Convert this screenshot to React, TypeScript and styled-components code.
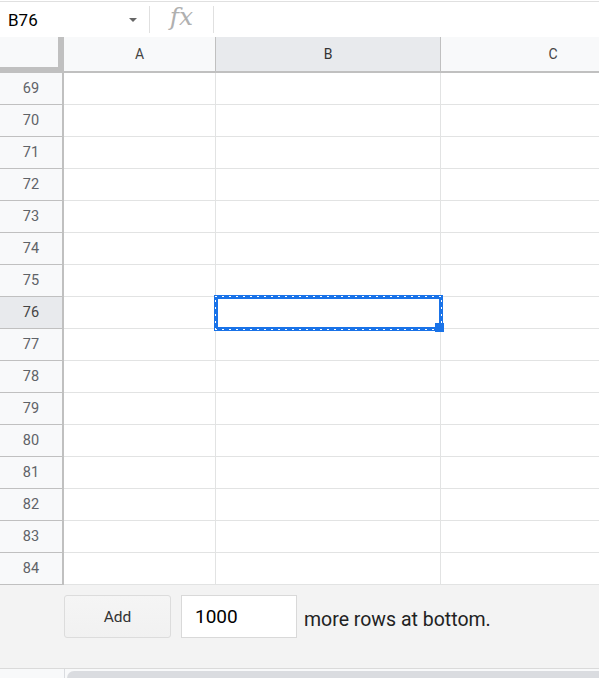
import React from "react";
import styled, { createGlobalStyle, css } from "styled-components";

const GlobalStyle = createGlobalStyle`
  html, body {
    margin: 0;
    padding: 0;
    background: #ffffff;
    font-family: Roboto, "Liberation Sans", Arial, sans-serif;
    overflow: hidden;
  }
`;

const Page = styled.div`
  width: 599px;
  height: 678px;
  display: flex;
  flex-direction: column;
  overflow: hidden;
`;

// name box + formula input
const FormulaBar = styled.div`
  height: 35px;
  margin-top: 1px;
  border-top: 1px solid #e0e0e0;
  display: flex;
  align-items: center;
  flex-shrink: 0;
`;

const NameBox = styled.div`
  width: 149px;
  height: 100%;
  display: flex;
  align-items: center;
  justify-content: space-between;
  padding: 0 12px 0 8px;
  box-sizing: border-box;
  font-size: 17px;
  color: #000;
`;

const Caret = styled.span`
  width: 0;
  height: 0;
  border-left: 4px solid transparent;
  border-right: 4px solid transparent;
  border-top: 4px solid #666;
`;

const Divider = styled.div`
  width: 1px;
  height: 27px;
  background: #e0e0e0;
`;

const Fx = styled.span`
  width: 63px;
  text-align: center;
  font-family: "DejaVu Serif", "Liberation Serif", serif;
  font-style: italic;
  font-size: 25px;
  color: #b0b0b0;
  margin-top: -6px;
`;

const Sheet = styled.div`
  display: grid;
  grid-template-columns: 64px 152px 225px 225px;
  grid-auto-rows: 32px;
  grid-template-rows: 36px;
  flex-shrink: 0;
`;

const Corner = styled.div`
  background: #f8f9fa;
  border-right: 6px solid #c0c0c0;
  border-bottom: 6px solid #c0c0c0;
  box-sizing: border-box;
`;

const ColHead = styled.div<{ $active?: boolean }>`
  background: ${(p) => (p.$active ? "#e8eaed" : "#f8f9fa")};
  border-right: 1px solid #c0c0c0;
  border-bottom: 2px solid #c0c0c0;
  box-sizing: border-box;
  display: flex;
  align-items: center;
  justify-content: center;
  font-size: 14px;
  color: ${(p) => (p.$active ? "#333" : "#444")};
`;

const RowHead = styled.div<{ $active?: boolean }>`
  background: ${(p) => (p.$active ? "#e8eaed" : "#f8f9fa")};
  border-right: 2px solid #c0c0c0;
  border-bottom: 1px solid #c0c0c0;
  box-sizing: border-box;
  display: flex;
  align-items: center;
  justify-content: center;
  font-size: 14.5px;
  color: ${(p) => (p.$active ? "#444" : "#5f6368")};
`;

const Cell = styled.div<{ $selected?: boolean }>`
  position: relative;
  border-right: 1px solid #e2e3e3;
  border-bottom: 1px solid #e2e3e3;
  box-sizing: border-box;
  ${(p) =>
    p.$selected &&
    css`
      z-index: 1;
    `}
`;

// copy outline with marching-ants dashes
const CopyOutline = styled.div`
  position: absolute;
  left: -2px;
  top: -2px;
  right: -3px;
  bottom: -3px;
  border: 4px solid #1a73e8;
  pointer-events: none;

  &::after {
    content: "";
    position: absolute;
    inset: -3px;
    background:
      repeating-linear-gradient(90deg, #fff 0 2px, transparent 2px 7px) top / 100% 1px no-repeat,
      repeating-linear-gradient(90deg, #fff 0 2px, transparent 2px 7px) bottom / 100% 1px no-repeat,
      repeating-linear-gradient(0deg, #fff 0 2px, transparent 2px 7px) left / 1px 100% no-repeat,
      repeating-linear-gradient(0deg, #fff 0 2px, transparent 2px 7px) right / 1px 100% no-repeat;
  }
`;

const FillHandle = styled.div`
  position: absolute;
  right: -4px;
  bottom: -4px;
  width: 9px;
  height: 9px;
  background: #1a73e8;
  z-index: 2;
`;

const Footer = styled.div`
  height: 84px;
  background: #f3f3f3;
  border-bottom: 1px solid #dadada;
  display: flex;
  align-items: flex-start;
  padding: 10px 0 0 64px;
  box-sizing: border-box;
  flex-shrink: 0;
`;

const AddButton = styled.button`
  width: 107px;
  height: 43px;
  background: linear-gradient(#f5f5f5, #f1f1f1);
  border: 1px solid #dcdcdc;
  border-radius: 3px;
  font-family: Roboto, "Liberation Sans", Arial, sans-serif;
  font-size: 15.5px;
  color: #333;
  padding: 0;
  margin-right: 10px;
`;

const RowCount = styled.input`
  width: 116px;
  height: 43px;
  box-sizing: border-box;
  border: 1px solid #d9d9d9;
  background: #fff;
  font-family: Roboto, "Liberation Sans", Arial, sans-serif;
  font-size: 19px;
  color: #000;
  padding: 0 0 0 13px;
  margin-right: 7px;
  outline: none;
`;

const FooterText = styled.span`
  height: 43px;
  line-height: 50px;
  font-size: 19.5px;
  color: #222;
`;

const ScrollStrip = styled.div`
  flex: 1;
  display: flex;
  padding-top: 2px;
  background: #f8f9fa;
`;

const ScrollGutter = styled.div`
  width: 64px;
  border-right: 1px solid #dadce0;
  margin-top: -2px;
`;

const ScrollThumb = styled.div`
  flex: 1;
  margin-left: 2px;
  background: #dadce0;
  border-radius: 8px 0 0 0;
`;

const columns = ["A", "B", "C"];
const rows = Array.from({ length: 16 }, (_, i) => 69 + i);
const activeRow = 76;
const activeCol = "B";

export default function App() {
  return (
    <Page>
      <GlobalStyle />
      <FormulaBar>
        <NameBox>
          B76
          <Caret />
        </NameBox>
        <Divider />
        <Fx>fx</Fx>
        <Divider />
      </FormulaBar>

      <Sheet>
        <Corner />
        {columns.map((c) => (
          <ColHead key={c} $active={c === activeCol}>
            {c}
          </ColHead>
        ))}
        {rows.map((r) => (
          <React.Fragment key={r}>
            <RowHead $active={r === activeRow}>{r}</RowHead>
            {columns.map((c) => {
              const selected = r === activeRow && c === activeCol;
              return (
                <Cell key={c} $selected={selected}>
                  {selected && (
                    <>
                      <CopyOutline />
                      <FillHandle />
                    </>
                  )}
                </Cell>
              );
            })}
          </React.Fragment>
        ))}
      </Sheet>

      <Footer>
        <AddButton>Add</AddButton>
        <RowCount defaultValue="1000" />
        <FooterText>more rows at bottom.</FooterText>
      </Footer>

      <ScrollStrip>
        <ScrollGutter />
        <ScrollThumb />
      </ScrollStrip>
    </Page>
  );
}
